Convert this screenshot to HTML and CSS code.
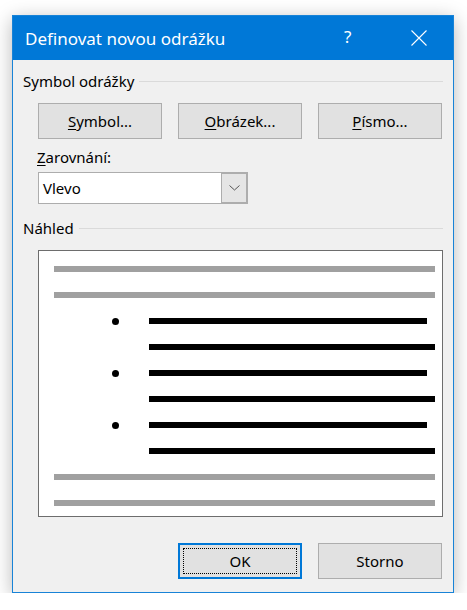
FILE: index.html
```html
<!DOCTYPE html>
<html>
<head>
<meta charset="utf-8">
<link rel="stylesheet" href="styles.css">
</head>
<body>
<div class="dialog">
  <div class="titlebar">
    <span class="title">Definovat novou odrážku</span>
    <span class="help">?</span>
    <svg class="close" width="16" height="16" viewBox="0 0 16 16"><path d="M0.5 0.5 L15.5 15.5 M15.5 0.5 L0.5 15.5" stroke="#fff" stroke-width="1.1" fill="none"/></svg>
  </div>
  <div class="content">
    <div class="group"><span>Symbol odrážky</span><div class="rule"></div></div>
    <div class="btnrow">
      <div class="btn"><u>S</u>ymbol...</div>
      <div class="btn"><u>O</u>brázek...</div>
      <div class="btn"><u>P</u>ísmo...</div>
    </div>
    <div class="label"><u>Z</u>arovnání:</div>
    <div class="select">
      <span class="value">Vlevo</span>
      <div class="arrow"><svg width="11" height="6" viewBox="0 0 11 6"><path d="M0.5 0.5 L5.5 5 L10.5 0.5" stroke="#555" stroke-width="1" fill="none"/></svg></div>
    </div>
    <div class="group g2"><span>Náhled</span><div class="rule"></div></div>
    <div class="preview">
      <div class="line gray"></div>
      <div class="line gray"></div>
      <div class="item"><span class="dot"></span><div class="line black short"></div></div>
      <div class="line black cont"></div>
      <div class="item"><span class="dot"></span><div class="line black short"></div></div>
      <div class="line black cont"></div>
      <div class="item"><span class="dot"></span><div class="line black short"></div></div>
      <div class="line black cont"></div>
      <div class="line gray"></div>
      <div class="line gray"></div>
    </div>
    <div class="footer">
      <div class="btn ok"><div class="focus">OK</div></div>
      <div class="btn">Storno</div>
    </div>
  </div>
</div>
</body>
</html>
```
FILE: styles.css
```css
html, body { margin: 0; padding: 0; background: #ffffff; }
body { font-family: "Noto Sans", "Open Sans", sans-serif; color: #000; }
.dialog {
  margin: 15px 0 0 12px;
  width: 442px;
  height: 578px;
  box-sizing: border-box;
  border: 1px solid #1883d7;
  background: #f0f0f0;
  box-shadow: 0 4px 18px rgba(0,0,0,0.28);
  display: flex;
  flex-direction: column;
}
.titlebar {
  height: 44px;
  background: #0078d7;
  color: #fff;
  display: flex;
  align-items: center;
  position: relative;
}
.title { font-size: 17px; margin-left: 12px; margin-top: 1px; }
.help { position: absolute; left: 331px; top: 9px; font-size: 17px; }
.close { position: absolute; left: 398px; top: 14px; }
.content { padding: 0 10px 0 10px; display: flex; flex-direction: column; }
.group { display: flex; align-items: center; height: 20px; margin-top: 11px; font-size: 15px; }
.group .rule { flex: 1; height: 1px; background: #dadada; margin-left: 5px; margin-top: 1px; }
.g2 { margin-top: 14px; }
.btnrow { display: flex; gap: 16px; margin: 12px 0 0 15px; }
.btn {
  width: 124px; height: 36px; box-sizing: border-box;
  background: #e1e1e1; border: 1px solid #adadad;
  display: flex; align-items: center; justify-content: center;
  font-size: 15px;
}
.btn u { text-decoration-thickness: 1px; text-underline-offset: 2px; }
.label { margin: 7px 0 0 14px; font-size: 15px; height: 22px; line-height: 22px; }
.label u { text-decoration-thickness: 1px; text-underline-offset: 2px; }
.select {
  margin: 4px 0 0 15px;
  width: 210px; height: 32px; box-sizing: border-box;
  border: 1px solid #adadad; background: #fff;
  display: flex; align-items: center; justify-content: space-between;
  font-size: 15px;
}
.value { margin-left: 4px; }
.arrow {
  width: 26px; height: 30px; box-sizing: border-box;
  border: 1px solid #adadad; background: #e5e5e5; margin-right: 0;
  display: flex; align-items: center; justify-content: center;
}
.preview {
  margin: 12px 0 0 15px;
  width: 405px; height: 267px; box-sizing: border-box;
  border: 1px solid #6d6d6d; background: #fff;
  padding: 15px 7px 0 15px;
  display: flex; flex-direction: column; gap: 20px;
}
.line { height: 6px; }
.gray { background: #a0a0a0; width: 381px; }
.black { background: #000; }
.item { display: flex; align-items: center; height: 6px; }
.dot { width: 7px; height: 7px; border-radius: 50%; background: #000; margin-left: 58px; }
.short { width: 278px; margin-left: 30px; }
.cont { width: 286px; margin-left: 95px; }
.footer { display: flex; gap: 16px; margin: 26px 0 0 155px; }
.ok { border: 2px solid #0078d7; padding: 3px; }
.focus { width: 100%; height: 100%; box-sizing: border-box; border: 1px dotted #000; display: flex; align-items: center; justify-content: center; }
```
